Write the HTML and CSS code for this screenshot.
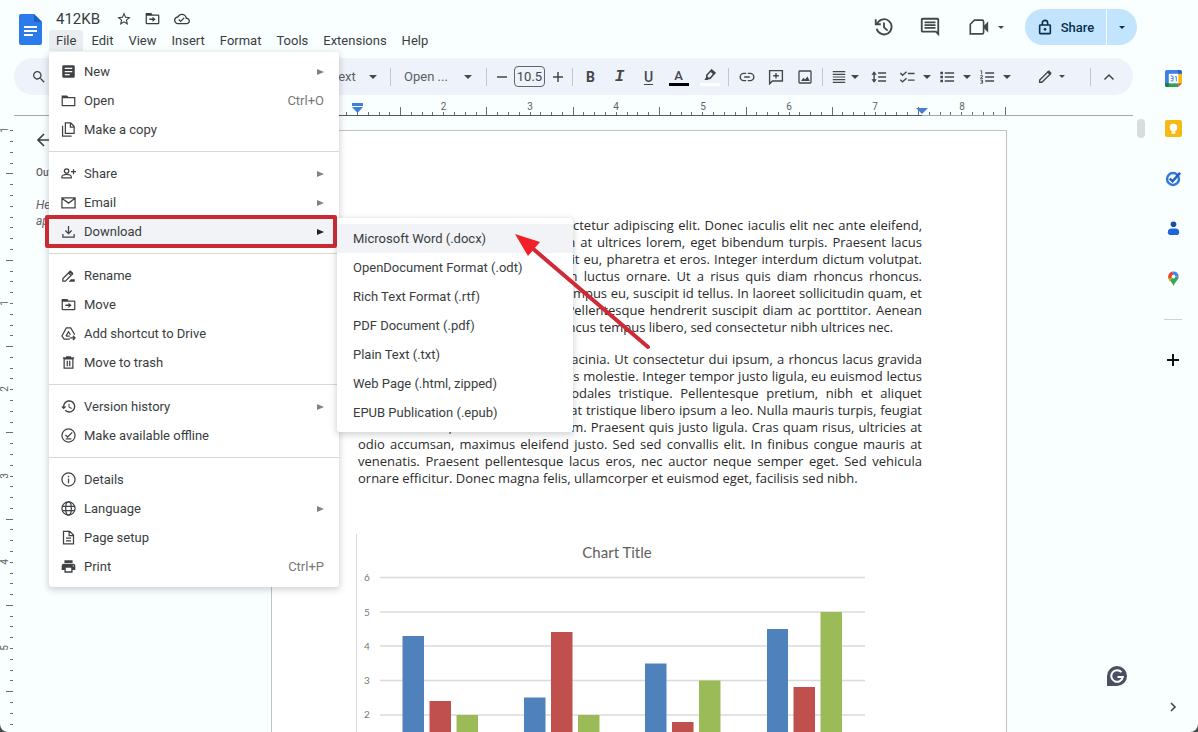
FILE: index.html
```html
<!DOCTYPE html>
<html lang="en">
<head>
<meta charset="utf-8">
<title>412KB</title>
<link rel="stylesheet" href="styles.css">
</head>
<body>
<svg class="sprite" aria-hidden="true">
  <symbol id="caret" viewBox="0 0 8 4"><path d="M0 0h8L4 4z"/></symbol>
  <symbol id="more" viewBox="0 0 7 6"><path d="M0 0l7 3-7 3z"/></symbol>
  <symbol id="star" viewBox="0 0 24 24"><path d="M22 9.24l-7.19-.62L12 2 9.19 8.63 2 9.24l5.46 4.73L5.82 21 12 17.27 18.18 21l-1.63-7.03L22 9.24zM12 15.4l-3.76 2.27 1-4.28-3.32-2.88 4.38-.38L12 6.1l1.71 4.04 4.38.38-3.32 2.88 1 4.28L12 15.4z"/></symbol>
  <symbol id="folder" viewBox="0 0 24 24"><path d="M1 4h8.500l2.500 2.500h11V21H1zm2 4.500V19h18V8.500z" fill-rule="evenodd"/></symbol>
  <symbol id="move" viewBox="0 0 24 24"><path d="M1 3h9l2 2.500h9a2 2 0 0 1 2 2V19a2 2 0 0 1-2 2H3a2 2 0 0 1-2-2zm2 4.500V19h18V7.500z" fill-rule="evenodd"/><path d="M7 12h5V9l5 4.200-5 4.200v-3H7z"/></symbol>
  <symbol id="cloud" viewBox="0 0 24 24"><path d="M19.35 10.04C18.67 6.59 15.64 4 12 4 9.11 4 6.6 5.64 5.35 8.04 2.34 8.36 0 10.91 0 14c0 3.31 2.69 6 6 6h13c2.76 0 5-2.24 5-5 0-2.64-2.05-4.78-4.65-4.96zM19 18H6c-2.21 0-4-1.79-4-4 0-2.05 1.53-3.76 3.56-3.97l1.07-.11.5-.95C8.08 7.14 9.94 6 12 6c2.62 0 4.88 1.86 5.39 4.43l.3 1.5 1.53.11c1.56.1 2.78 1.41 2.78 2.96 0 1.65-1.35 3-3 3zm-9-3.82l-2.09-2.09L6.5 13.5 10 17l6.01-6.01-1.41-1.41z"/></symbol>
  <symbol id="search" viewBox="0 0 24 24"><path d="M15.5 14h-.79l-.28-.27C15.41 12.59 16 11.11 16 9.5 16 5.91 13.09 3 9.5 3S3 5.91 3 9.5 5.91 16 9.5 16c1.61 0 3.09-.59 4.23-1.57l.27.28v.79l5 4.99L20.49 19l-4.99-5zm-6 0C7.01 14 5 11.99 5 9.5S7.01 5 9.5 5 14 7.01 14 9.5 11.99 14 9.5 14z"/></symbol>
  <symbol id="history" viewBox="0 0 24 24"><g fill="none" stroke="currentColor" stroke-width="2"><path d="M4.2 9A8.3 8.3 0 1 1 4 14"/><path d="M3 3.500v5.500h5.500M12 7v5.500l4 3.500"/></g></symbol>
  <symbol id="version" viewBox="1 1 22 22"><path d="M13 3c-4.97 0-9 4.03-9 9H1l3.96 4.03L9 12H6c0-3.87 3.130-7 7-7s7 3.130 7 7-3.130 7-7 7c-1.930 0-3.680-.79-4.940-2.060l-1.420 1.420C8.270 19.990 10.510 21 13 21c4.970 0 9-4.030 9-9s-4.030-9-9-9zm-1 5v5l4.280 2.540.72-1.210-3.500-2.080V8H12z"/></symbol>
  <symbol id="comment" viewBox="0 0 24 24"><path d="M22 4c0-1.100-.9-2-2-2H4c-1.100 0-2 .9-2 2v12c0 1.100.9 2 2 2h14l4 4V4zM20 4v13.170L18.830 16H4V4h16zM6 12h12v2H6zm0-3h12v2H6zm0-3h12v2H6z"/></symbol>
  <symbol id="meet" viewBox="0 0 24 24"><path d="M7 4.500h8.500a1.500 1.500 0 0 1 1.500 1.500v12a1.500 1.500 0 0 1-1.500 1.500H2.500V9z" fill="none" stroke="currentColor" stroke-width="1.800"/><path d="M17 11l5-5v12l-5-5z"/></symbol>
  <symbol id="lock" viewBox="0 0 24 24"><g fill="none" stroke="currentColor" stroke-width="2.400"><rect x="4" y="9" width="16" height="13" rx="1"/><path d="M8 9V6a4 4 0 0 1 8 0V9"/></g><circle cx="12" cy="15.500" r="2"/></symbol>
  <symbol id="new" viewBox="0 0 24 24"><path d="M4 2h16a2 2 0 0 1 2 2v16a2 2 0 0 1-2 2H4a2 2 0 0 1-2-2V4a2 2 0 0 1 2-2zm2 4v2h12V6zm0 5v2h12v-2zm0 5v2h8v-2z" fill-rule="evenodd"/></symbol>
  <symbol id="copy" viewBox="0 0 24 24"><g fill="none" stroke="currentColor" stroke-width="2"><path d="M7 1.500h8.500L21 7v11H7z"/><path d="M15 2v6h6M2.500 6v16.500H17"/></g></symbol>
  <symbol id="person-add" viewBox="0 0 24 24"><g fill="none" stroke="currentColor" stroke-width="2"><circle cx="9" cy="8" r="3.500"/><path d="M1.500 19v-2c0-2 4-3.500 7.500-3.500s7.500 1.500 7.500 3.500v2zM20 5v8M16 9h8"/></g></symbol>
  <symbol id="mail" viewBox="0 0 24 24"><path d="M1.500 4.500h21v16h-21zM2.500 6l9.500 7 9.500-7" fill="none" stroke="currentColor" stroke-width="2"/></symbol>
  <symbol id="download" viewBox="0 0 24 24"><path d="M12 3v12M7 10.500l5 5 5-5M3 16v5h18v-5" fill="none" stroke="currentColor" stroke-width="2"/></symbol>
  <symbol id="rename" viewBox="0 0 24 24"><path d="M3 21v-4L14 6l4 4L7 21zM12 8l4 4" fill="none" stroke="currentColor" stroke-width="2"/><path d="M15 3.500l5 5-2 2-5-5zM12 22l4-4h6v4z"/></symbol>
  <symbol id="shortcut" viewBox="0 0 24 24"><path d="M14 21H5l-3.500-5L8.500 3h7L22 14M8 16l4-7 3 5M8 16h6M14 19h8M19 15.500l3.500 3.500-3.500 3.500" fill="none" stroke="currentColor" stroke-width="2"/></symbol>
  <symbol id="trash" viewBox="0 0 24 24"><path d="M5 6h14v15H5zM3 4.500h18M8 3h8M10 9v9M14 9v9" fill="none" stroke="currentColor" stroke-width="2"/></symbol>
  <symbol id="offline" viewBox="0 0 24 24"><path d="M7 11l3.500 3.500L18 7M7.500 17.500h9" fill="none" stroke="currentColor" stroke-width="2"/><circle cx="12" cy="12" r="10.500" fill="none" stroke="currentColor" stroke-width="2"/></symbol>
  <symbol id="info" viewBox="0 0 24 24"><circle cx="12" cy="12" r="10.500" fill="none" stroke="currentColor" stroke-width="2"/><path d="M11 10.500h2V18h-2zM11 6h2v2.500h-2z"/></symbol>
  <symbol id="globe" viewBox="0 0 24 24"><g fill="none" stroke="currentColor" stroke-width="2"><circle cx="12" cy="12" r="10.500"/><ellipse cx="12" cy="12" rx="4.500" ry="10.500"/><path d="M2.500 8.500h19M2.500 15.500h19"/></g></symbol>
  <symbol id="page" viewBox="0 0 24 24"><path d="M4 2h10l6 6v14H4zM13 2v7h7M8 13h8M8 17.500h8" fill="none" stroke="currentColor" stroke-width="2"/></symbol>
  <symbol id="print" viewBox="1 1 22 22"><path d="M19 8H5c-1.660 0-3 1.340-3 3v6h4v4h12v-4h4v-6c0-1.660-1.340-3-3-3zm-3 11H8v-5h8v5zm3-7c-.55 0-1-.45-1-1s.45-1 1-1 1 .45 1 1-.45 1-1 1zm-1-9H6v4h12V3z"/></symbol>
  <symbol id="undo" viewBox="0 0 24 24"><path d="M8 4L4 8l4 4M4 8h10a5 5 0 0 1 0 10H8" fill="none" stroke="currentColor" stroke-width="2"/></symbol>
  <symbol id="redo" viewBox="0 0 24 24"><path d="M16 4l4 4-4 4M20 8H10a5 5 0 0 0 0 10h6" fill="none" stroke="currentColor" stroke-width="2"/></symbol>
  <symbol id="spell" viewBox="0 0 24 24"><path d="M3 15L8 4l5 11M5 11h6M10 18l4 4 8-9" fill="none" stroke="currentColor" stroke-width="2"/></symbol>
  <symbol id="paint" viewBox="0 0 24 24"><path d="M4 3h14v5H4zM18 5h3v7h-9v9" fill="none" stroke="currentColor" stroke-width="2"/></symbol>
  <symbol id="marker" viewBox="0 0 20 20"><path d="M6 9l6-6.500 4 3.500-6 7H6z" fill="none" stroke="currentColor" stroke-width="2"/><path d="M10 4l2-2 5 4-2 3zM6 10l3 3-2 2H3z"/></symbol>
  <symbol id="link" viewBox="0 0 20 20"><path d="M9 5.500H6a4.200 4.200 0 0 0 0 9h3M11 5.500h3a4.200 4.200 0 0 1 0 9h-3M6.500 10h7" fill="none" stroke="currentColor" stroke-width="1.800"/></symbol>
  <symbol id="add-comment" viewBox="0 0 20 20"><path d="M2 2h16v13H5.500L2 18.500zM10 5v7M6.500 8.500h7" fill="none" stroke="currentColor" stroke-width="1.700"/></symbol>
  <symbol id="image" viewBox="0 0 20 20"><rect x="2.500" y="2.500" width="15" height="15" rx="1" fill="none" stroke="currentColor" stroke-width="1.600"/><path d="M5 15l3-4 2 2 3-3.500 3 5.500z"/></symbol>
  <symbol id="align" viewBox="0 0 18 18"><path d="M2 3h14M2 6h14M2 9h14M2 12h14M2 15h14" fill="none" stroke="currentColor" stroke-width="1.400"/></symbol>
  <symbol id="spacing" viewBox="0 0 18 18"><path d="M8 4.500h9M8 9h9M8 13.500h9M3.500 4v10" fill="none" stroke="currentColor" stroke-width="1.600"/><path d="M.5 6.500l3-4 3 4zM.5 11.500l3 4 3-4z"/></symbol>
  <symbol id="checklist" viewBox="0 0 18 18"><path d="M10 5h7.500M10 12.500h7.500M1.500 4.500L4 7l4.500-4M1.500 12L4 14.500l4.500-4" fill="none" stroke="currentColor" stroke-width="1.600"/></symbol>
  <symbol id="bullets" viewBox="0 0 18 18"><path d="M6.500 4.500H17M6.500 9H17M6.500 13.500H17" fill="none" stroke="currentColor" stroke-width="1.600"/><path d="M1.500 3h3v3h-3zM1.500 7.500h3v3h-3zM1.500 12h3v3h-3z"/></symbol>
  <symbol id="numbers" viewBox="0 0 18 18"><path d="M7 4.500h10M7 9h10M7 13.500h10" fill="none" stroke="currentColor" stroke-width="1.600"/><path d="M1.500 2H3v4M1.500 7.500H4v1l-2.500 2h3M1.500 12.500H4V16H1.500M2.500 14.200H4" fill="none" stroke="currentColor"/></symbol>
  <symbol id="pencil" viewBox="0 0 18 18"><path d="M3 15v-2.500L12.500 3 15 5.500 5.500 15z" fill="none" stroke="currentColor" stroke-width="1.600"/><path d="M11 3.500L13.500 1.500l3 3L14.500 7z"/></symbol>
  <symbol id="chevron" viewBox="0 0 12 12"><path d="M1.500 8.500L6 4l4.500 4.500" fill="none" stroke="currentColor" stroke-width="1.500"/></symbol>
</svg>

<div class="app">
  <header class="header">
    <a class="logo" href="#" aria-label="Docs home">
      <svg viewBox="0 0 23 31"><path d="M2 0h13l8 8v21a2 2 0 0 1-2 2H2a2 2 0 0 1-2-2V2a2 2 0 0 1 2-2z" fill="#2b7bea"/><path d="M15 0l8 8h-8z" fill="#1a5fc4"/><path d="M5 12h13v2H5zM5 16h13v2H5zM5 20h9v2H5z" fill="#fff"/></svg>
    </a>
    <div class="heading">
      <div class="title-row">
        <input class="title" aria-label="Document name" value="412KB">
        <button class="title-btn" aria-label="Star"><svg class="i16"><use href="#star"/></svg></button>
        <button class="title-btn" aria-label="Move"><svg class="i15"><use href="#move"/></svg></button>
        <button class="title-btn" aria-label="Document status"><svg class="i16"><use href="#cloud"/></svg></button>
      </div>
      <ul class="menubar">
        <li><button class="menubar-btn open">File</button>
          <ul class="menu file-menu">
            <li><button class="row"><svg><use href="#new"/></svg>New<svg class="more"><use href="#more"/></svg></button></li>
            <li><button class="row"><svg><use href="#folder"/></svg>Open<span class="keys">Ctrl+O</span></button></li>
            <li><button class="row"><svg><use href="#copy"/></svg>Make a copy</button></li>
            <li class="rule"></li>
            <li><button class="row"><svg><use href="#person-add"/></svg>Share<svg class="more"><use href="#more"/></svg></button></li>
            <li><button class="row"><svg><use href="#mail"/></svg>Email<svg class="more"><use href="#more"/></svg></button></li>
            <li class="marked"><button class="row active"><svg><use href="#download"/></svg>Download<svg class="more"><use href="#more"/></svg></button>
              <ul class="menu submenu">
                <li><button class="row active">Microsoft Word (.docx)</button></li>
                <li><button class="row">OpenDocument Format (.odt)</button></li>
                <li><button class="row">Rich Text Format (.rtf)</button></li>
                <li><button class="row">PDF Document (.pdf)</button></li>
                <li><button class="row">Plain Text (.txt)</button></li>
                <li><button class="row">Web Page (.html, zipped)</button></li>
                <li><button class="row">EPUB Publication (.epub)</button></li>
              </ul>
              <svg class="pointer" viewBox="0 0 145 125" aria-hidden="true"><path d="M20 17L137 117" stroke="#cf2a36" stroke-width="4" stroke-linecap="round"/><path d="M4 4l25 8-12 14z" fill="#f0202b"/></svg>
            </li>
            <li class="rule"></li>
            <li><button class="row"><svg><use href="#rename"/></svg>Rename</button></li>
            <li><button class="row"><svg><use href="#move"/></svg>Move</button></li>
            <li><button class="row"><svg><use href="#shortcut"/></svg>Add shortcut to Drive</button></li>
            <li><button class="row"><svg><use href="#trash"/></svg>Move to trash</button></li>
            <li class="rule"></li>
            <li><button class="row"><svg><use href="#version"/></svg>Version history<svg class="more"><use href="#more"/></svg></button></li>
            <li><button class="row"><svg><use href="#offline"/></svg>Make available offline</button></li>
            <li class="rule"></li>
            <li><button class="row"><svg><use href="#info"/></svg>Details</button></li>
            <li><button class="row"><svg><use href="#globe"/></svg>Language<svg class="more"><use href="#more"/></svg></button></li>
            <li><button class="row"><svg><use href="#page"/></svg>Page setup</button></li>
            <li><button class="row"><svg><use href="#print"/></svg>Print<span class="keys">Ctrl+P</span></button></li>
          </ul>
        </li>
        <li><button class="menubar-btn">Edit</button></li>
        <li><button class="menubar-btn">View</button></li>
        <li><button class="menubar-btn">Insert</button></li>
        <li><button class="menubar-btn">Format</button></li>
        <li><button class="menubar-btn">Tools</button></li>
        <li><button class="menubar-btn">Extensions</button></li>
        <li><button class="menubar-btn">Help</button></li>
      </ul>
    </div>
    <div class="actions">
      <button class="action" aria-label="Last edit"><svg class="i22"><use href="#history"/></svg></button>
      <button class="action" aria-label="Comments"><svg class="i22"><use href="#comment"/></svg></button>
      <button class="action meet" aria-label="Join a call"><svg class="i22"><use href="#meet"/></svg><svg class="caret small"><use href="#caret"/></svg></button>
      <div class="share">
        <button class="share-main"><svg class="i16"><use href="#lock"/></svg>Share</button>
        <button class="share-more" aria-label="Sharing options"><svg class="caret small"><use href="#caret"/></svg></button>
      </div>
    </div>
  </header>

  <div class="toolbar" role="toolbar" aria-label="Formatting">
    <button class="tool" aria-label="Search the menus"><svg class="i18"><use href="#search"/></svg></button>
    <button class="tool" aria-label="Undo"><svg class="i16"><use href="#undo"/></svg></button>
    <button class="tool" aria-label="Redo"><svg class="i16"><use href="#redo"/></svg></button>
    <button class="tool" aria-label="Print"><svg class="i16"><use href="#print"/></svg></button>
    <button class="tool" aria-label="Spelling"><svg class="i16"><use href="#spell"/></svg></button>
    <button class="tool" aria-label="Paint format"><svg class="i16"><use href="#paint"/></svg></button>
    <span class="divider"></span>
    <label class="pick zoom"><select aria-label="Zoom"><option>100%</option></select><svg class="caret"><use href="#caret"/></svg></label>
    <span class="divider"></span>
    <label class="pick style"><select aria-label="Styles"><option>Normal text</option></select><svg class="caret"><use href="#caret"/></svg></label>
    <span class="divider"></span>
    <label class="pick font"><select aria-label="Font"><option>Open ...</option></select><svg class="caret"><use href="#caret"/></svg></label>
    <span class="divider"></span>
    <button class="tool step" aria-label="Decrease font size"><svg class="i12" viewBox="0 0 12 12"><path d="M1 6h10" stroke="currentColor" stroke-width="1.500"/></svg></button>
    <input class="size" aria-label="Font size" value="10.5">
    <button class="tool step" aria-label="Increase font size"><svg class="i12" viewBox="0 0 12 12"><path d="M1 6h10M6 1v10" stroke="currentColor" stroke-width="1.500"/></svg></button>
    <span class="divider"></span>
    <button class="tool letter bold">B</button>
    <button class="tool letter italic">I</button>
    <button class="tool letter under">U</button>
    <button class="tool wide color"><span class="swatch">A</span></button>
    <button class="tool wide" aria-label="Highlight color"><span class="swatch white"><svg class="i18"><use href="#marker"/></svg></span></button>
    <span class="divider"></span>
    <button class="tool" aria-label="Insert link"><svg class="i18"><use href="#link"/></svg></button>
    <button class="tool" aria-label="Add comment"><svg class="i18"><use href="#add-comment"/></svg></button>
    <button class="tool" aria-label="Insert image"><svg class="i18"><use href="#image"/></svg></button>
    <span class="divider"></span>
    <button class="split tight" aria-label="Align"><svg class="i18"><use href="#align"/></svg><svg class="caret"><use href="#caret"/></svg></button>
    <button class="tool wide" aria-label="Line spacing"><svg class="i18"><use href="#spacing"/></svg></button>
    <button class="split" aria-label="Checklist"><svg class="i18"><use href="#checklist"/></svg><svg class="caret"><use href="#caret"/></svg></button>
    <button class="split" aria-label="Bulleted list"><svg class="i18"><use href="#bullets"/></svg><svg class="caret"><use href="#caret"/></svg></button>
    <button class="split" aria-label="Numbered list"><svg class="i18"><use href="#numbers"/></svg><svg class="caret"><use href="#caret"/></svg></button>
    <button class="split tight mode" aria-label="Editing mode"><svg class="i18"><use href="#pencil"/></svg><svg class="caret small"><use href="#caret"/></svg></button>
    <span class="divider"></span>
    <button class="tool" aria-label="Hide the menus"><svg class="i12"><use href="#chevron"/></svg></button>
  </div>

  <svg class="ruler" aria-hidden="true">
    <path class="ticks" d="M256.500 17v3M343 17v3M429 17v3M516 17v3M602 17v3M688 17v3M775 17v3M861 17v3M947 17v3"/>
    <path class="ticks" d="M267 17v3M278 17v3M289 17v3M311 17v3M321 17v3M332 17v3M354 17v3M365 17v3M375 17v3M397 17v3M408 17v3M418 17v3M440 17v3M451 17v3M462 17v3M483 17v3M494 17v3M505 17v3M526 17v3M537 17v3M548 17v3M569 17v3M580 17v3M591 17v3M613 17v3M623 17v3M634 17v3M656 17v3M667 17v3M677 17v3M699 17v3M710 17v3M721 17v3M742 17v3M753 17v3M764 17v3M785 17v3M796 17v3M807 17v3M828 17v3M839 17v3M850 17v3M871 17v3M882 17v3M893 17v3M915 17v3M926 17v3M936 17v3M958 17v3M969 17v3M979 17v3"/>
    <path class="ticks" d="M300 12v8M386 12v8M472 12v8M559 12v8M645 12v8M732 12v8M818 12v8M904 12v8M991 12v8"/>
    <path d="M0 20.500h1119" stroke="#a5a8ab"/>
    <path d="M257 20.500h651" stroke="#55585c"/>
    <g class="ruler-text"><text x="429.500" y="15">2</text><text x="516" y="15">3</text><text x="602" y="15">4</text><text x="689" y="15">5</text><text x="775" y="15">6</text><text x="861" y="15">7</text><text x="948" y="15">8</text></g>
    <path d="M338 8h11v3h-11zM338 12h11l-5.500 6z" fill="#3f7fd6"/>
    <path d="M902 13h12l-6 6z" fill="#4a7fd0"/>
  </svg>

  <main class="workspace">
    <svg class="vruler" aria-hidden="true">
      <path class="ticks" d="M10 14h3M10 25h3M10 36h3M10 47h3M6 57h7M10 68h3M10 79h3M10 90h3M10 101h3M10 111h3M10 122h3M10 133h3M6 144h7M10 155h3M10 165h3M10 176h3M10 187h3M10 198h3M10 209h3M10 219h3M6 230h7M10 241h3M10 252h3M10 262h3M10 273h3M10 284h3M10 295h3M10 306h3M6 316h7M10 327h3M10 338h3M10 349h3M10 360h3M10 370h3M10 381h3M10 392h3M6 403h7M10 413h3M10 424h3M10 435h3M10 446h3M10 457h3M10 467h3M10 478h3M6 489h7M10 500h3M10 510h3M10 521h3M10 532h3M10 543h3M10 554h3M10 564h3M6 575h7M10 586h3M10 597h3M10 608h3"/>
      <g class="ruler-text"><text transform="translate(8 14)rotate(-90)">1</text><text transform="translate(8 187)rotate(-90)">1</text><text transform="translate(8 273)rotate(-90)">2</text><text transform="translate(8 360)rotate(-90)">3</text><text transform="translate(8 446)rotate(-90)">4</text><text transform="translate(8 532)rotate(-90)">5</text></g>
    </svg>
    <aside class="outline">
      <button class="back" aria-label="Close outline"><svg viewBox="0 0 14 14"><path d="M13 7H2M8 1L2 7l6 6" fill="none" stroke="currentColor" stroke-width="1.700"/></svg></button>
      <h2>Outline</h2>
      <p>Headings you add to the document will appear here.</p>
    </aside>
    <article class="paper">
      <p><span>Lorem ipsum dolor sit amet, consectetur adipiscing elit. Donec iaculis elit nec ante eleifend,</span>
      <span>id tempor dolor ut gravida. Nullam at ultrices lorem, eget bibendum turpis. Praesent lacus</span>
      <span>mi, dapibus non mauris sed, blandit eu, pharetra et eros. Integer interdum dictum volutpat.</span>
      <span>Sed non arcu eget quis est sapien luctus ornare. Ut a risus quis diam rhoncus rhoncus.</span>
      <span>Vivamus nulla lectus, viverra a ut tempus eu, suscipit id tellus. In laoreet sollicitudin quam, et</span>
      <span>dignissim eget nibh ultrices quis. Pellentesque hendrerit suscipit diam ac porttitor. Aenean</span>
      <span class="last">molestie, arcu sed vitae auctor rhoncus tempus libero, sed consectetur nibh ultrices nec.</span></p>
      <p><span>Aliquam vitae odio semper at nisl lacinia. Ut consectetur dui ipsum, a rhoncus lacus gravida</span>
      <span>eget. Nunc a lorem a sit amet mattis molestie. Integer tempor justo ligula, eu euismod lectus</span>
      <span>vulputate a. Fusce lorem in id sodales tristique. Pellentesque pretium, nibh et aliquet</span>
      <span>luctus, urna enim et rutrum tellus, at tristique libero ipsum a leo. Nulla mauris turpis, feugiat</span>
      <span>non nulla vitae, iaculis et cursus sem. Praesent quis justo ligula. Cras quam risus, ultricies at</span>
      <span>odio accumsan, maximus eleifend justo. Sed sed convallis elit. In finibus congue mauris at</span>
      <span>venenatis. Praesent pellentesque lacus eros, nec auctor neque semper eget. Sed vehicula</span>
      <span class="last">ornare efficitur. Donec magna felis, ullamcorper et euismod eget, facilisis sed nibh.</span></p>
      <svg class="chart" viewBox="0 0 566 290" role="img" aria-label="Chart Title">
        <path d="M.5 0v290" stroke="#d9d9d9"/>
        <text class="chart-title" x="261" y="24">Chart Title</text>
        <path d="M24 43.500h485M24 78h485M24 112h485M24 146.500h485M24 181h485M24 215h485M24 249h485" stroke="#dadada" stroke-width="1.500"/>
        <g class="axis"><text x="11" y="47">6</text><text x="11" y="82">5</text><text x="11" y="116">4</text><text x="11" y="150">3</text><text x="11" y="184">2</text></g>
        <path d="M46.500 102H68v147H46.500zM168 163.500h21.500V249H168zM289 129.500h21.500V249H289zM411 95h21v154h-21z" fill="#4f81bd"/>
        <path d="M73.500 167H95v82H73.500zM195 98h21.500v151H195zM316 188h21.500v61H316zM437.500 153H459v96h-21.500z" fill="#c0504d"/>
        <path d="M100.500 181H122v68h-21.500zM222 181h21.500v68H222zM343 146.500h21.500V249H343zM464.500 78H486v171h-21.500z" fill="#9bbb59"/>
      </svg>
    </article>
    <div class="gutter">
      <div class="thumb"></div>
      <button class="grammarly" aria-label="Grammarly"><svg viewBox="0 0 20 20"><path d="M0 20V10A10 10 0 1 1 10 20z" fill="#4c4f63"/><path d="M14.500 6.200A5.800 5.800 0 1 0 15.800 11H10.500" fill="none" stroke="#fff" stroke-width="2"/></svg></button>
    </div>
  </main>

  <nav class="side" aria-label="Side panel">
    <button class="app-btn" aria-label="Calendar"><svg viewBox="0 0 18 18"><path d="M2 0h13v5H5v13H2a2 2 0 0 1-2-2V2a2 2 0 0 1 2-2z" fill="#3f7de8"/><path d="M14 0h2a2 2 0 0 1 2 2v3h-4z" fill="#1f62d0"/><path d="M14 4h4v10h-4z" fill="#f9bb05"/><path d="M4 14h10v4H4z" fill="#30a350"/><path d="M0 14h4v4H2a2 2 0 0 1-2-2z" fill="#188038"/><path d="M14 14h4l-4 4z" fill="#ea4335"/><path d="M4 4h10v10H4z" fill="#fff"/><path d="M6 6.500h2.500v5H6M6.500 9h2M10.500 7H12v5" fill="none" stroke="#3f7de8"/></svg></button>
    <button class="app-btn" aria-label="Keep"><svg viewBox="0 0 18 18"><rect width="18" height="18" rx="2" fill="#f5ba15"/><circle cx="9" cy="8" r="4" fill="#fff"/><path d="M7 12h4v2.500H7z" fill="#fff"/></svg></button>
    <button class="app-btn" aria-label="Tasks"><svg viewBox="0 0 18 18"><circle cx="8.500" cy="9.500" r="6.300" fill="none" stroke="#3376dc" stroke-width="2.600"/><path d="M5 9l3 3 8-9" fill="none" stroke="#1f5fc4" stroke-width="2.600"/></svg></button>
    <button class="app-btn" aria-label="Contacts"><svg viewBox="0 0 18 18"><circle cx="9" cy="4.500" r="3" fill="#174ea6"/><path d="M3 13a4 4 0 0 1 4-4h4a4 4 0 0 1 4 4c0 2-1 3-3 3H6c-2 0-3-1-3-3z" fill="#1f66db"/></svg></button>
    <button class="app-btn" aria-label="Maps"><svg viewBox="0 0 18 18"><path d="M3.500 7C3.500 10.500 7 12 9 17c2-5 5.500-6.500 5.500-10z" fill="#34a853"/><path d="M3.500 7a5.500 5.500 0 0 1 1.500-3.800L9 7l-4 5C4 10.500 3.500 9 3.500 7z" fill="#e9a61c"/><path d="M5 3.200A5.500 5.500 0 0 1 8 1.600L9 7 4 9.500C3.300 7 3.500 5 5 3.200z" fill="#ea4335"/><path d="M8 1.600A5.500 5.500 0 0 1 14.500 7H9z" fill="#4285f4"/><circle cx="9" cy="7" r="2" fill="#fff"/></svg></button>
    <hr>
    <button class="app-btn" aria-label="Get add-ons"><svg class="i12" viewBox="0 0 12 12"><path d="M0 6h12M6 0v12" stroke="#111" stroke-width="2"/></svg></button>
    <button class="collapse" aria-label="Hide side panel"><svg class="i12" viewBox="0 0 12 12"><path d="M4 2l4 4-4 4" fill="none" stroke="#444" stroke-width="1.600"/></svg></button>
  </nav>
</div>
</body>
</html>
```

FILE: styles.css
```css
* { box-sizing: border-box; }

html { background: #4a4d50; }

body {
  margin: 0;
  font-family: Roboto, "Liberation Sans", sans-serif;
  font-size: 13px;
  color: #3a3d40;
}

button, input, select { font: inherit; color: inherit; }

button {
  display: flex;
  align-items: center;
  justify-content: center;
  padding: 0;
  border: 0;
  background: none;
}

ul { margin: 0; padding: 0; list-style: none; }

svg { display: block; flex: none; fill: currentColor; }

.sprite { display: none; }
.i12 { width: 12px; height: 12px; }
.i15 { width: 15px; height: 15px; }
.i16 { width: 16px; height: 16px; }
.i18 { width: 16px; height: 16px; }
.i22 { width: 22px; height: 22px; }
.caret { width: 8px; height: 4px; }
.caret.small { width: 6px; height: 3px; }

.app {
  display: grid;
  grid-template-columns: minmax(0, 1fr) 50px;
  grid-template-rows: auto auto auto minmax(0, 1fr);
  height: 100vh;
  overflow: hidden;
  background: #f9feff;
  border-radius: 0 0 8px 8px;
}

/* Header */
.header {
  position: relative;
  z-index: 2;
  display: flex;
  gap: 7px;
  height: 58px;
  padding: 7px 11px 0 19px;
}

.logo { width: 23px; height: 31px; margin-top: 7px; }

.title-row { display: flex; align-items: center; height: 23px; padding-left: 5px; }

.title {
  width: 55px;
  padding: 0 2px;
  border: 0;
  background: none;
  font-size: 15px;
}

.title-btn { width: 29px; }

.menubar { display: flex; gap: 1px; }
.menubar > li { position: relative; }
.menubar-btn { height: 21px; padding: 0 7px; }
.menubar-btn.open { background: #eaedef; border-radius: 3px 3px 0 0; }

.actions {
  display: flex;
  align-items: center;
  height: 40px;
  margin-left: auto;
  color: #44474a;
}

.action { width: 46px; height: 36px; }
.action.meet { width: 57px; gap: 8px; padding-left: 8px; margin-right: 15px; }

.share { display: flex; gap: 1px; color: #0b2f4d; font-weight: 500; }
.share button { height: 36px; background: #c2e5fd; }
.share-main { width: 81px; gap: 8px; border-radius: 18px 0 0 18px; }
.share-more { width: 30px; border-radius: 0 18px 18px 0; }

/* Menus */
.menu {
  position: absolute;
  padding: 5px 0 6px;
  background: #fff;
  border-radius: 3px;
  box-shadow: 0 2px 6px 1px rgba(60, 64, 67, 0.22);
}

.file-menu { top: 22px; left: 0; width: 290px; }

.row {
  width: 100%;
  height: 29px;
  padding: 0 15px 0 12px;
  gap: 8px;
  justify-content: flex-start;
  white-space: nowrap;
}

.row svg { width: 15px; height: 15px; color: #3f4245; }
.row.active { background: #f1f3f6; }
.rule { height: 1px; margin: 7px 0; background: #d6d8da; }
.keys { margin-left: auto; color: #75787b; }
.row .more { width: 7px; height: 6px; margin-left: auto; color: #808386; }
.row.active .more { color: #222; }

.marked { position: relative; }

.marked::after {
  content: "";
  position: absolute;
  inset: -2px 2px -2px -4px;
  border: 4px solid #cc2a33;
  border-radius: 2px;
  pointer-events: none;
}

.submenu { top: 1px; left: 288px; width: 236px; padding: 6px 0 5px; z-index: 1; }
.submenu .row { padding-left: 16px; }

.pointer {
  position: absolute;
  z-index: 2;
  top: 13px;
  left: 462px;
  width: 145px;
  height: 125px;
  pointer-events: none;
}

/* Toolbar */
.toolbar {
  display: flex;
  align-items: center;
  height: 37px;
  margin: 0 15px 0 14px;
  padding: 0 10px;
  border-radius: 19px;
  background: #eef2fa;
  color: #44474a;
}

.toolbar > * { flex: none; }
.divider { width: 1px; height: 18px; margin: 0 3px; background: #c3c7cd; }
.tool { width: 29px; height: 28px; }
.tool.wide { width: 31px; }
.tool.step { width: 23px; }
.tool.letter { font-size: 14px; font-weight: 700; }
.tool.italic { font-family: "Liberation Mono", monospace; font-style: italic; font-size: 16px; }
.tool.under { font-weight: 500; text-decoration: underline; text-underline-offset: 2px; }

.swatch {
  display: flex;
  justify-content: center;
  width: 20px;
  height: 18px;
  border-bottom: 3px solid #000;
  font-weight: 500;
  line-height: 15px;
}

.swatch.white { border-color: #fff; }

.pick { display: flex; align-items: center; justify-content: space-between; color: #5c6064; }
.pick svg { color: #44474a; }

.pick select {
  flex: 1;
  min-width: 0;
  padding: 0;
  border: 0;
  background: none;
  appearance: none;
}

.zoom { width: 68px; padding: 0 10px; }
.style { width: 107px; padding: 0 10px 0 8px; }
.font { width: 89px; padding: 0 11px 0 10px; }

.size {
  width: 31px;
  height: 21px;
  margin: 0 1px;
  padding: 0;
  border: 1px solid #63666a;
  border-radius: 4px;
  background: none;
  text-align: center;
}

.split { height: 28px; padding: 0 3px 0 5px; gap: 8px; }
.split.tight { padding: 0 4px 0 5px; gap: 4px; }
.split.mode { margin-left: auto; margin-right: 18px; gap: 6px; }

/* Rulers */
.ruler { width: 100%; height: 21px; padding-left: 14px; overflow: visible; }
.ruler-text { font-size: 10px; fill: #5f6265; text-anchor: middle; }
.ticks { stroke: #6a6d70; shape-rendering: crispEdges; }

/* Workspace */
.workspace { display: flex; overflow: hidden; }
.vruler { width: 16px; height: 100%; }

.outline {
  flex: 0 0 255px;
  padding: 17px 16px 0 20px;
  color: #5f6265;
}

.back { width: 14px; height: 14px; color: #3f4245; }
.back svg { width: 14px; height: 14px; }
.outline h2 { margin: 20px 0 18px; font-size: 10px; line-height: 12px; font-weight: 500; }
.outline p { margin: 0; font-size: 12px; line-height: 16px; font-style: italic; }

.paper {
  flex: 1;
  min-width: 0;
  margin-top: 14px;
  padding: 86px 84px 0;
  border: 1px solid #c0c3c5;
  border-bottom: 0;
  background: #fff;
  color: #2a2a2a;
  font-family: "Open Sans", sans-serif;
  font-size: 13px;
  line-height: 17px;
}

.paper p { margin: 0 0 15px; padding-left: 2px; }
.paper p span { display: block; text-align: justify; text-align-last: justify; white-space: nowrap; }
.paper p .last { text-align-last: left; }

.chart {
  width: 100%;
  margin-top: 47px;
  font-family: Lato, sans-serif;
}

.chart-title { font-size: 15px; fill: #606060; text-anchor: middle; }
.axis { font-size: 10px; fill: #777; text-anchor: middle; }

.gutter { position: relative; flex: 0 0 141px; }
.thumb { width: 8px; height: 19px; margin: 3px 3px 0 auto; border-radius: 4px; background: #d9dcde; }
.grammarly { position: absolute; right: 21px; bottom: 46px; width: 20px; height: 20px; }
.grammarly svg { width: 20px; height: 20px; }

/* Side panel */
.side {
  grid-column: 2;
  grid-row: 1 / -1;
  display: flex;
  flex-direction: column;
  align-items: center;
  padding: 69px 0 19px;
}

.app-btn { width: 18px; height: 18px; margin-bottom: 32px; }
.app-btn svg { width: 17px; height: 17px; }
.app-btn svg.i12, .collapse svg { width: 12px; height: 12px; }
.side hr { width: 18px; height: 1px; margin: 0 0 31px; border: 0; background: #cfd2d4; }
.collapse { margin-top: auto; }
```
